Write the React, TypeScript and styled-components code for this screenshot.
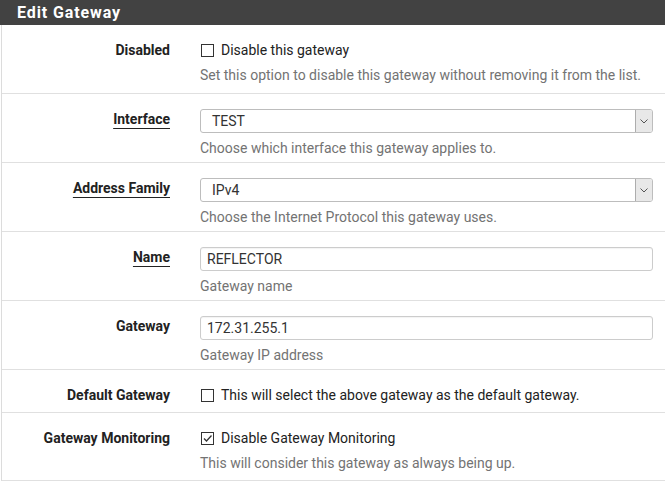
import React from "react";
import styled, { createGlobalStyle } from "styled-components";

const Global = createGlobalStyle`
  html, body {
    margin: 0;
    padding: 0;
    background: #ffffff;
    overflow: hidden;
    font-family: Roboto, "Liberation Sans", Arial, sans-serif;
  }
`;

const Panel = styled.div`
  width: 665px;
  background: #fff;
`;

const Heading = styled.div`
  height: 25px;
  background: #424242;
  color: #ffffff;
  font-size: 16px;
  font-weight: 700;
  line-height: 25px;
  padding-left: 17px;
  letter-spacing: 0.9px;
`;

const Body = styled.div`
  margin-left: 1px;
  border-left: 1px solid #dcdcdc;
`;

const Row = styled.div<{ $pb: number }>`
  display: grid;
  grid-template-columns: 168px 1fr;
  column-gap: 30px;
  padding: 15px 12px ${(p) => p.$pb}px 0;
  border-bottom: 1px solid #e0e0e0;
`;

const Label = styled.div<{ $required?: boolean }>`
  text-align: right;
  font-size: 14px;
  font-weight: 700;
  line-height: 20px;
  color: #222;
  span {
    text-decoration: ${(p) => (p.$required ? "underline" : "none")};
    text-decoration-thickness: 1px;
    text-underline-offset: 4px;
  }
`;

const Control = styled.div`
  display: flex;
  flex-direction: column;
  min-width: 0;
`;

const Help = styled.div`
  margin-top: 5px;
  font-size: 14px;
  line-height: 20px;
  color: #737373;
`;

const CheckLine = styled.label`
  display: flex;
  align-items: center;
  gap: 7px;
  height: 20px;
  font-size: 14px;
  color: #222;
  padding-left: 1px;
`;

const Box = styled.span`
  display: inline-flex;
  align-items: center;
  justify-content: center;
  width: 11px;
  height: 11px;
  border: 1px solid #333;
  background: #fff;
  box-sizing: content-box;
`;

const TextInput = styled.div`
  height: 24px;
  box-sizing: border-box;
  border: 1px solid #cccccc;
  border-radius: 3px;
  padding: 0 6px;
  font-size: 14px;
  line-height: 22px;
  color: #333;
  box-shadow: inset 0 1px 1px rgba(0, 0, 0, 0.05);
`;

const Select = styled.div`
  height: 24px;
  box-sizing: border-box;
  border: 1px solid #bdbdbd;
  border-radius: 3px;
  display: flex;
  align-items: stretch;
  font-size: 14px;
  color: #333;
`;

const SelectText = styled.div`
  flex: 1;
  padding-left: 11px;
  line-height: 22px;
`;

const Arrow = styled.div`
  width: 16px;
  background: #e8e8e8;
  border-left: 1px solid #adadad;
  display: flex;
  align-items: center;
  justify-content: center;
  border-radius: 0 2px 2px 0;
`;

function Checkbox({ checked, text }: { checked?: boolean; text: string }) {
  return (
    <CheckLine>
      <Box>
        {checked && (
          <svg width="11" height="11" viewBox="0 0 11 11">
            <path d="M2 5.5 L4.5 8 L9.5 2.5" fill="none" stroke="#333" strokeWidth="1.3" />
          </svg>
        )}
      </Box>
      {text}
    </CheckLine>
  );
}

function Dropdown({ value }: { value: string }) {
  return (
    <Select>
      <SelectText>{value}</SelectText>
      <Arrow>
        <svg width="8" height="5" viewBox="0 0 8 5">
          <path d="M0.5 0.5 L4 4 L7.5 0.5" fill="none" stroke="#555" strokeWidth="1" />
        </svg>
      </Arrow>
    </Select>
  );
}

export default function App() {
  return (
    <>
      <Global />
      <Panel>
        <Heading>Edit Gateway</Heading>
        <Body>
          <Row $pb={8}>
            <Label><span>Disabled</span></Label>
            <Control>
              <Checkbox text="Disable this gateway" />
              <Help>Set this option to disable this gateway without removing it from the list.</Help>
            </Control>
          </Row>
          <Row $pb={4}>
            <Label $required><span>Interface</span></Label>
            <Control>
              <Dropdown value="TEST" />
              <Help>Choose which interface this gateway applies to.</Help>
            </Control>
          </Row>
          <Row $pb={4}>
            <Label $required><span>Address Family</span></Label>
            <Control>
              <Dropdown value="IPv4" />
              <Help>Choose the Internet Protocol this gateway uses.</Help>
            </Control>
          </Row>
          <Row $pb={4}>
            <Label $required><span>Name</span></Label>
            <Control>
              <TextInput>REFLECTOR</TextInput>
              <Help>Gateway name</Help>
            </Control>
          </Row>
          <Row $pb={4}>
            <Label><span>Gateway</span></Label>
            <Control>
              <TextInput>172.31.255.1</TextInput>
              <Help>Gateway IP address</Help>
            </Control>
          </Row>
          <Row $pb={7}>
            <Label><span>Default Gateway</span></Label>
            <Control>
              <Checkbox text="This will select the above gateway as the default gateway." />
            </Control>
          </Row>
          <Row $pb={7}>
            <Label><span>Gateway Monitoring</span></Label>
            <Control>
              <Checkbox checked text="Disable Gateway Monitoring" />
              <Help>This will consider this gateway as always being up.</Help>
            </Control>
          </Row>
        </Body>
      </Panel>
    </>
  );
}
